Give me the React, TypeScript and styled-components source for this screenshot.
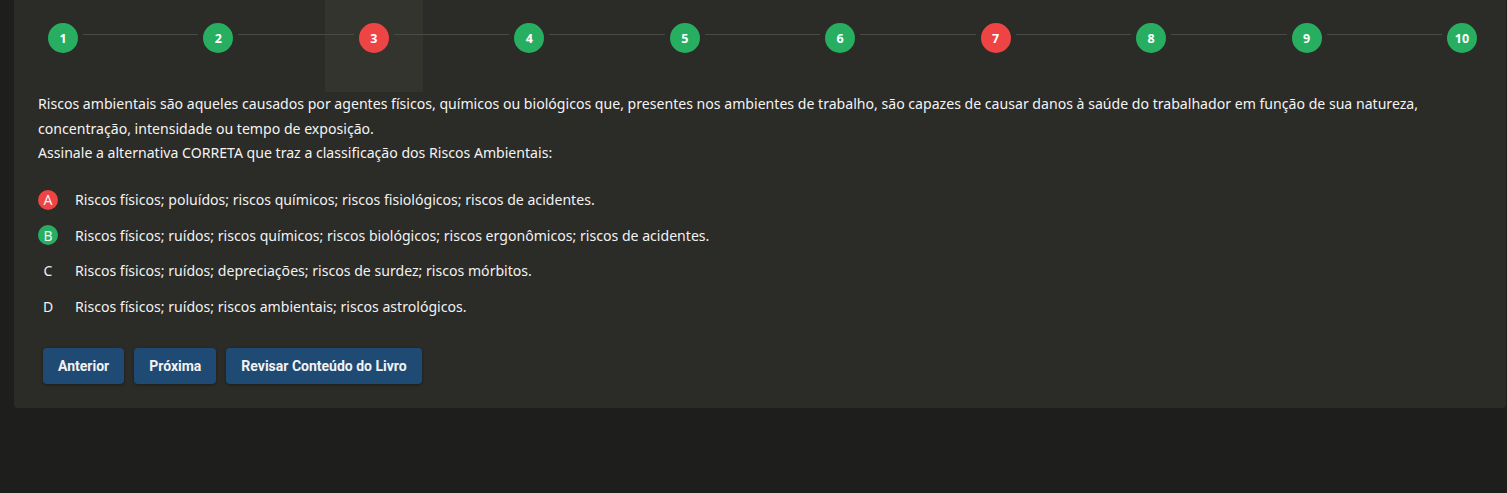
import React from 'react'
import styled, { createGlobalStyle } from 'styled-components'

const GlobalStyle = createGlobalStyle`
  html, body {
    margin: 0;
    padding: 0;
    background: #1e1e1c;
  }
  body {
    font-family: 'Noto Sans', 'Open Sans', sans-serif;
    color: #f2f2f2;
  }
`

const COLORS = {
  GREEN: '#27ae60',
  RED: '#ef4444',
  PANEL: '#2b2b28',
  HIGHLIGHT: '#34342f',
  LINE: '#4a4a46',
  BUTTON: '#1f4a73',
}

const Panel = styled.div`
  margin: 0 1px 0 14px;
  padding-bottom: 24px;
  background: ${COLORS.PANEL};
  border-radius: 0 0 4px 4px;
`

const Steps = styled.div`
  display: flex;
  align-items: center;
  padding: 23px 29px 0 34px;
  height: 30px;
`

const Step = styled.div<{ $current?: boolean }>`
  position: relative;
  flex: 0 0 auto;
  width: 30px;
  height: 30px;

  ${({ $current }) =>
    $current &&
    `
    &::before {
      content: '';
      position: absolute;
      top: -23px;
      left: -34px;
      width: 98px;
      height: 92px;
      background: ${COLORS.HIGHLIGHT};
    }
  `}
`

const StepCircle = styled.div<{ $wrong?: boolean }>`
  position: relative;
  display: flex;
  align-items: center;
  justify-content: center;
  width: 30px;
  height: 30px;
  border-radius: 50%;
  background: ${({ $wrong }) => ($wrong ? COLORS.RED : COLORS.GREEN)};
  color: #fff;
  font-family: 'Open Sans', sans-serif;
  font-weight: 700;
  font-size: 12.5px;
`

const Connector = styled.div`
  flex: 1;
  height: 1px;
  margin: 0 5px 7px;
  background: ${COLORS.LINE};
  position: relative;
  z-index: 1;
`

const Question = styled.div`
  padding: 39px 24px 0;
  font-size: 14.1px;
  line-height: 24.5px;
  color: #f4f4f4;
`

const Options = styled.div`
  display: flex;
  flex-direction: column;
  gap: 15.5px;
  padding: 24px 24px 0;
`

const Option = styled.div`
  display: flex;
  align-items: center;
  height: 20px;
  font-size: 14.1px;
`

const Letter = styled.span<{ $state?: 'right' | 'wrong' }>`
  display: flex;
  align-items: center;
  justify-content: center;
  width: 20px;
  height: 20px;
  margin-right: 17px;
  border-radius: 50%;
  font-size: 14px;
  background: ${({ $state }) =>
    $state === 'wrong' ? COLORS.RED : $state === 'right' ? COLORS.GREEN : 'transparent'};
`

const Actions = styled.div`
  display: flex;
  gap: 10px;
  padding: 32px 29px 0;
`

const Button = styled.button`
  height: 36px;
  padding: 0 15px;
  border: none;
  border-radius: 4px;
  background: ${COLORS.BUTTON};
  color: #f2f2f2;
  font-family: Roboto, 'Liberation Sans', sans-serif;
  font-weight: 700;
  font-size: 14px;
  box-shadow: 0 1px 3px rgba(0, 0, 0, 0.35);
  cursor: pointer;
`

const steps = [
  { n: 1 },
  { n: 2 },
  { n: 3, wrong: true, current: true },
  { n: 4 },
  { n: 5 },
  { n: 6 },
  { n: 7, wrong: true },
  { n: 8 },
  { n: 9 },
  { n: 10 },
]

const options: { letter: string; text: string; state?: 'right' | 'wrong' }[] = [
  { letter: 'A', text: 'Riscos físicos; poluídos; riscos químicos; riscos fisiológicos; riscos de acidentes.', state: 'wrong' },
  { letter: 'B', text: 'Riscos físicos; ruídos; riscos químicos; riscos biológicos; riscos ergonômicos; riscos de acidentes.', state: 'right' },
  { letter: 'C', text: 'Riscos físicos; ruídos; depreciações; riscos de surdez; riscos mórbitos.' },
  { letter: 'D', text: 'Riscos físicos; ruídos; riscos ambientais; riscos astrológicos.' },
]

export default function App() {
  return (
    <>
      <GlobalStyle />
      <Panel>
        <Steps>
          {steps.map((s, i) => (
            <React.Fragment key={s.n}>
              {i > 0 && <Connector />}
              <Step $current={s.current}>
                <StepCircle $wrong={s.wrong}>{s.n}</StepCircle>
              </Step>
            </React.Fragment>
          ))}
        </Steps>

        <Question>
          Riscos ambientais são aqueles causados por agentes físicos, químicos ou biológicos que, presentes nos
          ambientes de trabalho, são capazes de causar danos à saúde do trabalhador em função de sua natureza,
          concentração, intensidade ou tempo de exposição.
          <br />
          Assinale a alternativa CORRETA que traz a classificação dos Riscos Ambientais:
        </Question>

        <Options>
          {options.map((o) => (
            <Option key={o.letter}>
              <Letter $state={o.state}>{o.letter}</Letter>
              {o.text}
            </Option>
          ))}
        </Options>

        <Actions>
          <Button>Anterior</Button>
          <Button>Próxima</Button>
          <Button>Revisar Conteúdo do Livro</Button>
        </Actions>
      </Panel>
    </>
  )
}
